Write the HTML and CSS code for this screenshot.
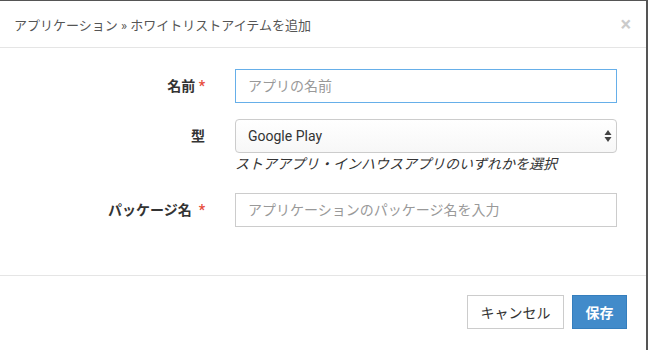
FILE: index.html
```html
<!DOCTYPE html>
<html lang="ja">
<head>
    <meta charset="UTF-8">
    <meta name="viewport" content="width=device-width, initial-scale=1.0">
    <title>ホワイトリストアイテムを追加</title>
    <link rel="stylesheet" href="styles.css">
</head>
<body>
    <div class="modal">
        <div class="modal-header">
            <h4 class="modal-title">アプリケーション » ホワイトリストアイテムを追加</h4>
            <span class="close">×</span>
        </div>

        <div class="modal-body">
            <div class="form-row">
                <label class="form-label">名前 <span class="req">*</span></label>
                <input class="form-control focused" type="text" placeholder="アプリの名前">
            </div>

            <div class="form-row">
                <label class="form-label">型</label>
                <div class="field">
                    <div class="select-wrap">
                        <div class="select">Google Play</div>
                        <svg class="select-arrows" width="8" height="14" viewBox="0 0 8 14">
                            <path d="M4 1 L7.5 6 L0.5 6 Z" fill="#444"/>
                            <path d="M4 13 L7.5 8 L0.5 8 Z" fill="#444"/>
                        </svg>
                    </div>
                    <p class="help">ストアアプリ・インハウスアプリのいずれかを選択</p>
                </div>
            </div>

            <div class="form-row">
                <label class="form-label">パッケージ名&nbsp; <span class="req">*</span></label>
                <input class="form-control" type="text" placeholder="アプリケーションのパッケージ名を入力">
            </div>
        </div>

        <div class="modal-footer">
            <button class="btn">キャンセル</button>
            <button class="btn btn-primary">保存</button>
        </div>
    </div>
</body>
</html>
```

FILE: styles.css
```css
body {
    margin: 0;
    background: #555;
    font-family: Roboto, "Noto Sans CJK JP", sans-serif;
    color: #333;
}
.modal {
    width: 646px;
    height: 349px;
    margin-top: 1px;
    background: #fff;
    box-sizing: border-box;
}
.modal-header {
    height: 46px;
    padding: 0 15px 0 14px;
    border-bottom: 1px solid #e5e5e5;
    display: flex;
    align-items: center;
    justify-content: space-between;
}
.modal-title {
    margin: 0;
    font-size: 13px;
    font-weight: normal;
    color: #555;
}
.close {
    font-size: 20px;
    font-weight: bold;
    color: #000;
    opacity: 0.2;
    line-height: 1;
    margin-top: -1px;
}
.modal-body {
    padding: 21px 0 48px 0;
    border-bottom: 1px solid #e5e5e5;
    display: flex;
    flex-direction: column;
    gap: 16px;
}
.form-row {
    display: grid;
    grid-template-columns: 205px 382px;
    column-gap: 30px;
    align-items: start;
}
.form-label {
    text-align: right;
    font-size: 14px;
    font-weight: bold;
    line-height: 34px;
    color: #333;
}
.req {
    color: #e74c3c;
}
.form-control {
    height: 34px;
    margin: 0;
    padding: 0 12px;
    border: 1px solid #ccc;
    border-radius: 0;
    box-sizing: border-box;
    font-family: inherit;
    font-size: 14px;
    color: #555;
    outline: none;
}
.form-control::placeholder {
    color: #999;
}
.focused {
    border-color: #66afe9;
}
.field {
    display: flex;
    flex-direction: column;
}
.select-wrap {
    position: relative;
}
.select {
    height: 34px;
    box-sizing: border-box;
    padding: 0 12px;
    border: 1px solid #ccc;
    border-radius: 4px;
    background: linear-gradient(#fff, #f7f7f7);
    font-size: 14px;
    line-height: 32px;
    color: #333;
}
.select-arrows {
    position: absolute;
    right: 5px;
    top: 10px;
}
.help {
    margin: 1px 0 3px 0;
    font-size: 14px;
    font-style: italic;
    color: #333;
    line-height: 20px;
}
.modal-footer {
    padding: 19px 19px 0 0;
    display: flex;
    justify-content: flex-end;
    gap: 8px;
}
.btn {
    height: 34px;
    padding: 0 12px;
    border: 1px solid #ccc;
    border-radius: 0;
    background: #fff;
    font-family: inherit;
    font-size: 14px;
    color: #333;
}
.btn:first-child {
    width: 97px;
}
.btn-primary {
    width: 55px;
    background: #428bca;
    border-color: #357ebd;
    color: #fff;
    font-weight: bold;
}
```
